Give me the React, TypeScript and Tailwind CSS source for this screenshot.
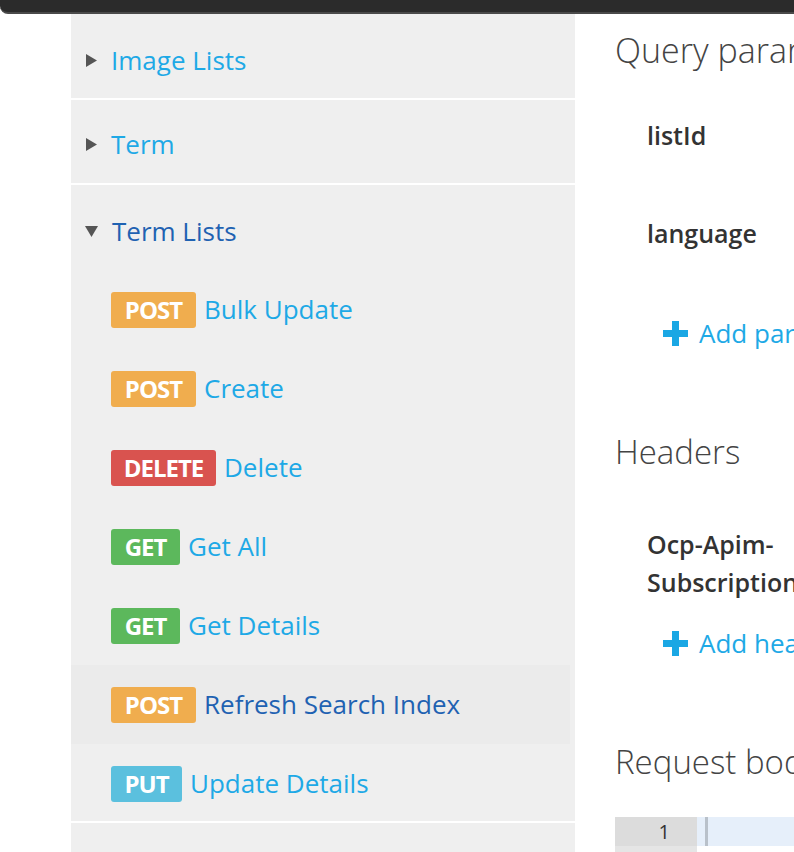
import React from 'react';

type Method = 'POST' | 'DELETE' | 'GET' | 'PUT';

const METHOD_STYLES: Record<Method, string> = {
  POST: 'bg-[#f0ad4e] w-[85px]',
  DELETE: 'bg-[#d9534f] w-[105px]',
  GET: 'bg-[#5cb85c] w-[69px]',
  PUT: 'bg-[#5bc0de] w-[71px]',
};

const OPERATIONS: { method: Method; name: string; active?: boolean }[] = [
  { method: 'POST', name: 'Bulk Update' },
  { method: 'POST', name: 'Create' },
  { method: 'DELETE', name: 'Delete' },
  { method: 'GET', name: 'Get All' },
  { method: 'GET', name: 'Get Details' },
  { method: 'POST', name: 'Refresh Search Index', active: true },
  { method: 'PUT', name: 'Update Details' },
];

function Caret({ open }: { open?: boolean }) {
  return open ? (
    <svg width="13" height="12" viewBox="0 0 13 12" className="shrink-0">
      <path d="M0 1 L13 1 L6.5 12 Z" fill="#555" />
    </svg>
  ) : (
    <svg width="11" height="13" viewBox="0 0 11 13" className="shrink-0">
      <path d="M0 0 L11 6.5 L0 13 Z" fill="#555" />
    </svg>
  );
}

function PlusIcon() {
  return (
    <svg width="25" height="25" viewBox="0 0 25 25" className="shrink-0">
      <rect x="9" y="0" width="7" height="25" fill="#1aa7e4" />
      <rect x="0" y="9" width="25" height="7" fill="#1aa7e4" />
    </svg>
  );
}

function GroupRow({ title, open }: { title: string; open?: boolean }) {
  return (
    <div className={`flex items-center gap-[14px] pl-[14px] h-[85px] ${open ? 'pt-[7px]' : 'pt-[10px]'}`}>
      <Caret open={open} />
      <span className={`text-[26px] ${open ? 'text-[#1f62b2]' : 'text-[#1ea9e6]'}`}>{title}</span>
    </div>
  );
}

function OperationRow({ method, name, active }: { method: Method; name: string; active?: boolean }) {
  return (
    <div className={`flex items-center gap-[8px] pl-[40px] h-[79px] ${active ? 'bg-[#ebebeb] mr-[5px]' : ''}`}>
      <span
        className={`${METHOD_STYLES[method]} h-[36px] rounded-[3px] flex items-center justify-center text-white font-bold text-[24px] tracking-[-1px]`}
      >
        {method}
      </span>
      <span className={`text-[26px] ${active ? 'text-[#1f62b2]' : 'text-[#1ea9e6]'}`}>{name}</span>
    </div>
  );
}

export default function App() {
  return (
    <div className="w-[794px] h-[852px] overflow-hidden bg-white font-['Open_Sans',sans-serif] whitespace-nowrap">
      <div className="h-[14px] bg-[#2b2b2b] border-b-[2px] border-[#4a4a4a] rounded-bl-[8px]" />

      <div className="flex">
        <div className="ml-[71px] w-[504px] bg-[#efefef] shrink-0 h-[838px]">
          <div className="h-[84px] flex items-center gap-[14px] pl-[15px] pt-[8px]">
            <Caret />
            <span className="text-[26px] text-[#1ea9e6]">Image Lists</span>
          </div>
          <div className="h-[2px] bg-white" />
          <div className="h-[83px] flex items-center gap-[14px] pl-[15px] pt-[6px]">
            <Caret />
            <span className="text-[26px] text-[#1ea9e6]">Term</span>
          </div>
          <div className="h-[2px] bg-white" />
          <GroupRow title="Term Lists" open />
          {OPERATIONS.map(op => (
            <OperationRow key={op.name} {...op} />
          ))}
          <div className="h-[2px] bg-white -mt-[2px]" />
        </div>

        <div className="ml-[40px] flex-1 min-w-0 text-[#333]">
          <h2 className="text-[34px] font-light text-[#444] h-[72px] flex items-center">Query parameters</h2>
          <div className="pl-[32px]">
            <div className="h-[100px] flex items-center text-[25px] font-semibold">listId</div>
            <div className="h-[95px] flex items-center text-[25px] font-semibold">language</div>
            <div className="h-[105px] flex items-center gap-[11px] pl-[16px] text-[26px] text-[#1ea9e6]">
              <PlusIcon />
              <span>Add parameter</span>
            </div>
          </div>
          <h2 className="mt-[43px] text-[33px] font-light text-[#444] h-[46px] flex items-center">Headers</h2>
          <div className="pl-[32px]">
            <div className="mt-[50px] text-[25px] font-semibold leading-[38px]">
              <div>Ocp-Apim-</div>
              <div>Subscription-Key</div>
            </div>
            <div className="mt-[19px] h-[46px] flex items-center gap-[11px] pl-[16px] text-[26px] text-[#1ea9e6]">
              <PlusIcon />
              <span>Add header</span>
            </div>
          </div>
          <h2 className="mt-[73px] text-[33px] font-light text-[#444] h-[46px] flex items-center">Request body</h2>
          <div className="mt-[32px] flex h-[29px]">
            <div className="w-[82px] bg-[#dcdcdc] flex items-center justify-end pr-[27px] text-[20px] text-[#333]">1</div>
            <div className="flex-1 bg-[#e6effa] flex">
              <div className="ml-[8px] w-[3px] bg-[#b9c1ca]" />
            </div>
          </div>
          <div className="w-[82px] h-[10px] bg-[#e5e5e5]" />
        </div>
      </div>
    </div>
  );
}
